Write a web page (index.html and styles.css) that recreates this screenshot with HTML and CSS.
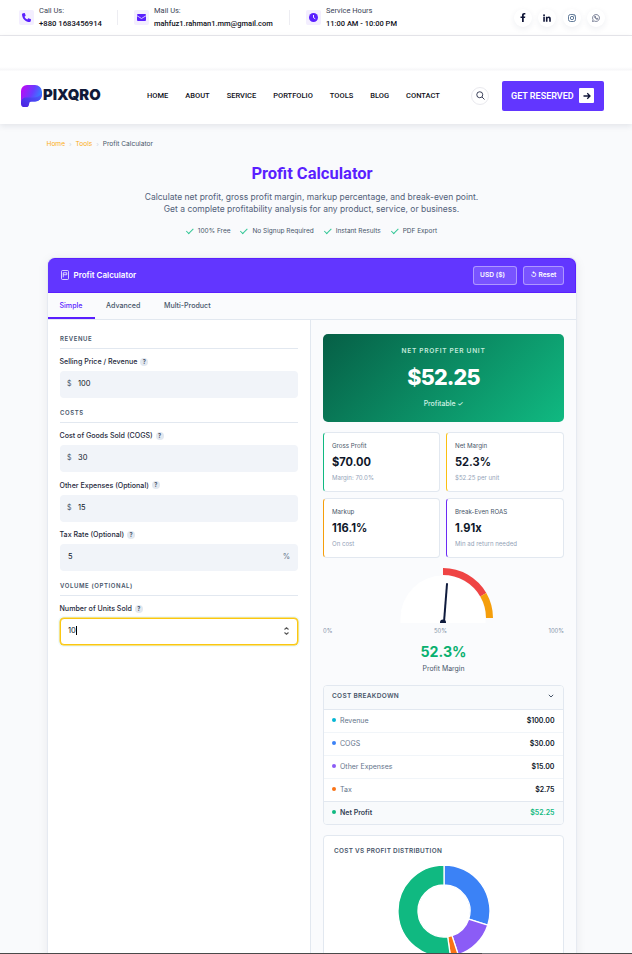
FILE: index.html
```html
<!DOCTYPE html>
<html lang="en">
  <head>
    <meta charset="UTF-8" />
    <title>Profit Calculator</title>
    <link rel="stylesheet" href="styles.css">
  </head>
  <body>
    <!-- Top bar -->
    <div class="topbar">
      <div class="contact call">
        <span class="contact-icon">
          <svg width="9" height="9" viewBox="0 0 512 512"><path fill="#5a1fff" d="M165 25c-8-19-29-29-48-23L29 26C12 31 0 46 0 64c0 247 201 448 448 448 18 0 33-12 38-29l24-88c6-19-4-40-23-48l-96-40c-16-7-35-2-46 12l-41 49C234 335 177 278 144 208l49-40c14-11 19-30 12-47z"/></svg>
        </span>
        <div><span>Call Us:</span><b>+880 1683456914</b></div>
      </div>
      <div class="contact mail">
        <span class="contact-icon">
          <svg width="9" height="7" viewBox="0 0 18 14"><rect width="18" height="14" rx="2" fill="#5a1fff"/><path d="M0 3.5l9 5.5 9-5.5" fill="none" stroke="#f3eeff" stroke-width="1.6"/></svg>
        </span>
        <div><span>Mail Us:</span><b>mahfuz1.rahman1.mm@gmail.com</b></div>
      </div>
      <div class="contact hours">
        <span class="contact-icon">
          <svg width="9" height="9" viewBox="0 0 18 18"><circle cx="9" cy="9" r="9" fill="#5a1fff"/><path d="M9 4v5.300l3.500 2.200" fill="none" stroke="#fff" stroke-width="1.800"/></svg>
        </span>
        <div><span>Service Hours</span><b>11:00 AM - 10:00 PM</b></div>
      </div>
      <div class="socials">
        <a><svg width="8" height="9" viewBox="0 0 16 18"><path fill="#0f1537" d="M6 18v-8H3V7h3V4.500C6 1.500 7.700 0 10.300 0c1.200 0 2.400.2 2.400.2v2.700h-1.400C10 2.900 9.500 3.800 9.500 4.600V7h3.100l-.5 3H9.500v8z"/></svg></a>
        <a><svg width="8" height="8" viewBox="0 0 16 16"><path fill="#0f1537" d="M.5 5.300h3.200V15.500H.5zM2.100.5a1.900 1.900 0 1 1 0 3.800 1.900 1.900 0 0 1 0-3.800zM5.800 5.300h3v1.400c.5-.9 1.600-1.700 3-1.700 3.200 0 3.800 2.100 3.800 4.900v5.600h-3.200v-5c0-1.200 0-2.700-1.600-2.700S9 9.100 9 10.500v5H5.800z"/></svg></a>
        <a><svg width="8" height="8" viewBox="0 0 16 16" fill="none" stroke="#30527a" stroke-width="1.500"><rect x="1" y="1" width="14" height="14" rx="4"/><circle cx="8" cy="8" r="3.300"/><circle cx="12" cy="4" r=".4"/></svg></a>
        <a><svg width="8" height="8" viewBox="0 0 16 16" fill="none" stroke="#3d4566" stroke-width="1.300"><path d="M1 15l1-3.700A6.900 6.900 0 1 1 4.700 14z"/><path d="M5.500 4.500c-1 2 3 7 5.700 6l.4-1.500-2-1-.8 1C7.500 8.500 7 7.500 6.600 6.800l.6-.8-.7-1.700z"/></svg></a>
      </div>
    </div>

    <!-- Main navigation -->
    <div class="navbar">
      <div class="logo">
        <svg width="21" height="22" viewBox="0 0 21 22">
          <defs>
            <linearGradient id="logoMain" x1="0" y1="0.300" x2="1" y2="0.700">
              <stop offset="0" stop-color="#b90cf5"/><stop offset="0.500" stop-color="#6a3cff"/><stop offset="1" stop-color="#2395ff"/>
            </linearGradient>
            <linearGradient id="logoLeg" x1="0" y1="1" x2="1" y2="0">
              <stop offset="0" stop-color="#4e1de0"/><stop offset="1" stop-color="#4a63ff"/>
            </linearGradient>
          </defs>
          <path fill="url(#logoMain)" d="M6 0h8a7 7 0 0 1 7 7v2.500a7 7 0 0 1-7 7H8L0 19V6a6 6 0 0 1 6-6z"/>
          <path fill="url(#logoLeg)" d="M0 18c0-3.500 2-5.500 6-5.500h6c4 0 7-1.500 8.700-4.500.8 5-2.200 8.500-6.700 8.500h-3.500c-1.500 0-2 .7-2.300 2.200A4 4 0 0 1 0 18z"/>
        </svg>
        <span>PIXQRO</span>
      </div>
      <div class="menu">
        <a>HOME</a><a>ABOUT</a><a>SERVICE</a><a>PORTFOLIO</a><a>TOOLS</a><a>BLOG</a><a>CONTACT</a>
      </div>
      <div class="search">
        <svg width="9" height="9" viewBox="0 0 18 18" fill="none" stroke="#1d2340" stroke-width="1.700"><circle cx="7.500" cy="7.500" r="6"/><path d="M12 12l5 5"/></svg>
      </div>
      <div class="reserve">
        <span>GET RESERVED</span>
        <i><svg width="8" height="8" viewBox="0 0 16 16" fill="none" stroke="#0f1537" stroke-width="2.600"><path d="M1 8h13M8.500 2.500L14 8l-5.500 5.500"/></svg></i>
      </div>
    </div>

    <!-- Page heading -->
    <div class="breadcrumb"><a>Home</a><i>›</i><a>Tools</a><i>›</i><span>Profit Calculator</span></div>
    <h1>Profit Calculator</h1>
    <p class="intro">Calculate net profit, gross profit margin, markup percentage, and break-even point.<br>Get a complete profitability analysis for any product, service, or business.</p>
    <div class="perks">
      <span>100% Free</span>
      <span>No Signup Required</span>
      <span>Instant Results</span>
      <span>PDF Export</span>
    </div>

    <!-- Calculator -->
    <div class="calculator">
      <div class="calc-header">
        <svg width="8" height="10" viewBox="0 0 16 20" fill="none" stroke="#fff" stroke-width="1.500"><rect x="1" y="1" width="14" height="18" rx="2"/><path d="M4.500 5.500h7v4h-7M4.500 5.500v9"/></svg>
        <h2>Profit Calculator</h2>
        <button class="currency">USD ($)</button>
        <button class="reset">↺ Reset</button>
      </div>
      <div class="tabs">
        <a class="active">Simple</a><a>Advanced</a><a>Multi-Product</a>
      </div>
      <div class="panes">
        <div class="inputs">
          <h3>REVENUE</h3>
          <label>Selling Price / Revenue <i>?</i></label>
          <div class="field"><span class="prefix">$</span>100</div>
          <h3>COSTS</h3>
          <label>Cost of Goods Sold (COGS) <i>?</i></label>
          <div class="field"><span class="prefix">$</span>30</div>
          <label>Other Expenses (Optional) <i>?</i></label>
          <div class="field"><span class="prefix">$</span>15</div>
          <label>Tax Rate (Optional) <i>?</i></label>
          <div class="field">5<span class="suffix">%</span></div>
          <h3>VOLUME (OPTIONAL)</h3>
          <label>Number of Units Sold <i>?</i></label>
          <div class="field focused">10<span class="caret"></span>
            <svg class="spinner" width="5" height="8" viewBox="0 0 5 8" fill="none" stroke="#555" stroke-width="1.100"><path d="M.5 2.500l2-1.700 2 1.700M.5 5.500l2 1.700 2-1.700"/></svg>
          </div>
        </div>

        <div class="results">
          <div class="net-profit">
            <span class="net-label">NET PROFIT PER UNIT</span>
            <span class="net-value">$52.25</span>
            <span class="net-status">Profitable ✓</span>
          </div>
          <div class="metrics">
            <div class="metric green"><span>Gross Profit</span><b>$70.00</b><small>Margin: 70.0%</small></div>
            <div class="metric yellow"><span>Net Margin</span><b>52.3%</b><small>$52.25 per unit</small></div>
            <div class="metric orange"><span>Markup</span><b>116.1%</b><small>On cost</small></div>
            <div class="metric purple"><span>Break-Even ROAS</span><b>1.91x</b><small>Min ad return needed</small></div>
          </div>
          <div class="gauge">
            <svg width="100" height="55" viewBox="0 0 100 55">
              <path fill="#fff" d="M7.500 55v-5a42.500 42.500 0 0 1 85 0v5z"/>
              <path fill="none" stroke="#ef4444" stroke-width="7" d="M50 3.500A46.500 46.500 0 0 1 90.270 26.750"/>
              <path fill="none" stroke="#f59e0b" stroke-width="7" d="M90.270 26.750A46.500 46.500 0 0 1 96.500 50"/>
              <path stroke="#0f1b3d" stroke-width="2" stroke-linecap="round" d="M51 54L54 16"/>
              <circle cx="50" cy="54.500" r="3" fill="#0f1b3d"/>
            </svg>
            <div class="scale"><span>0%</span><span>50%</span><span>100%</span></div>
            <b>52.3%</b>
            <span>Profit Margin</span>
          </div>
          <div class="breakdown">
            <div class="breakdown-head">COST BREAKDOWN
              <svg width="6" height="4" viewBox="0 0 6 4" fill="none" stroke="#475569"><path d="M.8.800L3 3 5.200.800"/></svg>
            </div>
            <div class="row cyan"><span>Revenue</span><b>$100.00</b></div>
            <div class="row blue"><span>COGS</span><b>$30.00</b></div>
            <div class="row purple"><span>Other Expenses</span><b>$15.00</b></div>
            <div class="row orange"><span>Tax</span><b>$2.75</b></div>
            <div class="row total"><span>Net Profit</span><b>$52.25</b></div>
          </div>
          <div class="chart">
            <h4>COST VS PROFIT DISTRIBUTION</h4>
            <svg width="94" height="94" viewBox="-47 -47 94 94" stroke="#fff" stroke-width="1.300">
              <path fill="#3b82f6" d="M0-46A46 46 0 0 1 43.750 14.210L24.730 8.030A26 26 0 0 0 0-26z"/>
              <path fill="#8b5cf6" d="M43.750 14.210A46 46 0 0 1 14.210 43.750L8.030 24.730A26 26 0 0 0 24.730 8.030z"/>
              <path fill="#f97316" d="M14.210 43.750A46 46 0 0 1 6.480 45.540L3.660 25.740A26 26 0 0 0 8.030 24.730z"/>
              <path fill="#10b981" d="M6.480 45.540A46 46 0 1 1 0-46V-26A26 26 0 1 0 3.660 25.740z"/>
            </svg>
          </div>
        </div>
      </div>
    </div>
    <div class="bottom-edge"></div>
  </body>
</html>
```

FILE: styles.css
```css
* {
  box-sizing: border-box;
}
body {
  margin: 0;
  height: 954px;
  display: flex;
  flex-direction: column;
  overflow: hidden;
  font-family: Inter, sans-serif;
  font-size: 7px;
  color: #0f172a;
  background: #f9fafc;
}
h1,
h2,
h3,
h4,
p {
  margin: 0;
}
i {
  font-style: normal;
}
svg {
  display: block;
  flex-shrink: 0;
}

/* top bar */
.topbar {
  flex: none;
  height: 36px;
  display: flex;
  align-items: center;
  padding: 0 27px 0 19px;
  background: #fff;
  border-bottom: 1px solid #e8e8ec;
  font-family: Roboto, sans-serif;
  font-size: 7.5px;
}
.contact {
  display: flex;
  align-items: center;
  gap: 5px;
  color: #3a3f55;
}
.call {
  width: 115px;
}
.mail {
  width: 172px;
}
.contact-icon {
  width: 15px;
  height: 15px;
  display: flex;
  align-items: center;
  justify-content: center;
  border-radius: 2px;
  background: #f3eeff;
}
.contact div {
  display: flex;
  flex-direction: column;
  line-height: 13px;
  margin-top: -2px;
  white-space: nowrap;
}
.contact b {
  font-weight: 500;
  color: #0f1020;
}
.call b {
  font-size: 7.7px;
}
.call::after,
.mail::after {
  content: "";
  width: 1px;
  height: 15px;
  margin: 0 16px 0 auto;
  background: #ededf2;
}
.socials {
  margin-left: auto;
  display: flex;
  gap: 6.4px;
}
.socials a {
  width: 18px;
  height: 18px;
  display: flex;
  align-items: center;
  justify-content: center;
  border-radius: 50%;
  background: #fff;
  box-shadow: 0 2px 6px rgba(30, 40, 90, 0.07);
}

/* navbar */
.navbar {
  flex: none;
  height: 88px;
  padding: 31px 28px 0 21px;
  display: flex;
  align-items: center;
  background: linear-gradient(#fff 31px, #f6f6f8 34px, #fff 35px);
  box-shadow: 0 2px 6px rgba(30, 40, 70, 0.1);
}
.logo {
  width: 126px;
  display: flex;
  align-items: center;
  font-size: 14.8px;
  font-weight: 900;
  color: #101a38;
}
.logo span {
  margin: -2px 0 0 1px;
}
.menu {
  display: flex;
  width: 324px;
  gap: 17px;
  font-family: Roboto, sans-serif;
  font-size: 7.5px;
  font-weight: 500;
  color: #0f1020;
}
.search {
  width: 18px;
  height: 18px;
  display: flex;
  align-items: center;
  justify-content: center;
  border: 1px solid #e9e9ee;
  border-radius: 50%;
}
.reserve {
  width: 102px;
  height: 30px;
  margin-left: auto;
  padding: 0 10px 0 9px;
  display: flex;
  align-items: center;
  justify-content: space-between;
  border-radius: 2px;
  background: #6236ff;
  color: #fff;
  font: 600 9px Roboto, sans-serif;
  white-space: nowrap;
}
.reserve i {
  width: 15px;
  height: 15px;
  display: flex;
  align-items: center;
  justify-content: center;
  border-radius: 1px;
  background: #fff;
}

/* heading */
.breadcrumb {
  display: flex;
  margin: 14px 0 0 46.5px;
  font-size: 6.6px;
  line-height: 12px;
  color: #475569;
}
.breadcrumb a {
  color: #fbad18;
}
.breadcrumb i {
  width: 10.5px;
  text-align: center;
  color: #cbd5e1;
}
h1 {
  margin-top: 14px;
  text-align: center;
  font: 700 16.5px/20px Roboto, sans-serif;
  color: #5a1fff;
  padding-right: 8px;
}
.intro {
  margin-top: 7px;
  padding-right: 9px;
  text-align: center;
  font-size: 8.5px;
  line-height: 12.3px;
  color: #52617a;
}
.perks {
  display: flex;
  justify-content: center;
  gap: 11px;
  margin-top: 9.4px;
  padding-right: 8px;
  font-size: 6.5px;
  line-height: 12px;
  color: #475569;
}
.perks span {
  display: flex;
  align-items: center;
  gap: 4px;
}
.perks span::before {
  content: "";
  width: 6px;
  height: 3px;
  border: solid #34c796;
  border-width: 0 0 1px 1px;
  transform: rotate(-45deg) translateY(-1px);
}

/* calculator card */
.calculator {
  flex: none;
  width: 528px;
  height: 740px;
  margin: 21px 0 0 48px;
  border-radius: 7px;
  background: #fff;
  box-shadow: 0 0 0 1px #e6eaf1, 0 2px 12px rgba(15, 23, 42, 0.08);
}
.calc-header {
  height: 35px;
  display: flex;
  align-items: center;
  padding: 0 11px 0 13px;
  border-radius: 7px 7px 0 0;
  background: #6236ff;
  border: solid #5a1fff;
  border-width: 1px 1px 1px 0;
  color: #fff;
}
.calc-header h2 {
  margin-left: 4.500px;
  margin-right: auto;
  font-size: 8px;
  font-weight: 600;
}
button {
  height: 19px;
  padding: 0;
  border: 1px solid rgba(255, 255, 255, 0.4);
  border-radius: 3px;
  background: rgba(255, 255, 255, 0.15);
  color: #fff;
  font: 600 6.600px Inter, sans-serif;
}
.currency {
  width: 44px;
  padding-right: 5px;
  margin-right: 6px;
}
.reset {
  width: 41px;
}
.tabs {
  height: 27px;
  display: flex;
  background: #fafbfd;
  border-bottom: 1px solid #e2e8f0;
}
.tabs a {
  height: 26px;
  line-height: 25px;
  padding: 0 12px 0 11.500px;
  font-weight: 500;
  font-size: 7.1px;
  color: #475569;
}
.tabs .active {
  color: #5a1fff;
  border-bottom: 2px solid #5a1fff;
}
.panes {
  display: grid;
  grid-template-columns: 262px 266px;
  height: 678px;
}

/* inputs */
.inputs {
  padding: 4px 12px 0;
}
h3 {
  height: 16px;
  margin: 9.2px 0 6px;
  padding-top: 1px;
  border-bottom: 1px solid #e2e8f0;
  font-size: 6px;
  line-height: 9px;
  font-weight: 600;
  letter-spacing: 0.6px;
  color: #475569;
}
label {
  display: flex;
  align-items: center;
  height: 13px;
  margin: 0 0 3px -0.5px;
  font-size: 7.1px;
  font-weight: 500;
  color: #1e293b;
}
label i {
  width: 8px;
  height: 8px;
  margin-left: 3px;
  border-radius: 50%;
  background: #e2e8f0;
  text-align: center;
  font-size: 5.5px;
  line-height: 8px;
  font-weight: 700;
  color: #475569;
}
.field {
  height: 27px;
  display: flex;
  align-items: center;
  padding: 0 8px 2px;
  border-radius: 4px;
  background: #f1f4f9;
  font-size: 7.5px;
  color: #0f172a;
}
.field + label {
  margin-top: 6.4px;
}
.prefix {
  width: 11px;
  margin-left: -1px;
  font-size: 7px;
  color: #475569;
}
.suffix,
.spinner {
  margin-left: auto;
  color: #64748b;
}
.focused {
  padding: 0 8px 2px 7px;
  border: 1px solid #fbc710;
  background: #fff;
  box-shadow: 0 0 0 0.5px #fbc710, 0 0 0 2px #eefafc;
}
.caret {
  width: 1px;
  height: 9px;
  background: #000;
}

/* results */
.results {
  display: flex;
  flex-direction: column;
  padding: 14px 12px 0;
  background: #fafbfd;
  border-left: 1px solid #e2e8f0;
}
.net-profit {
  flex: none;
  height: 88px;
  display: flex;
  flex-direction: column;
  align-items: center;
  padding-top: 11px;
  border-radius: 5px;
  background: linear-gradient(135deg, #065f46, #10b981);
  color: #fff;
}
.net-label {
  font-size: 6.6px;
  line-height: 12px;
  font-weight: 600;
  letter-spacing: 0.7px;
  color: #c3eadb;
}
.net-value {
  margin-top: 7px;
  font-size: 21.5px;
  line-height: 26px;
  font-weight: 800;
  letter-spacing: -0.8px;
}
.net-status {
  margin-top: 8px;
  font-size: 6.9px;
  line-height: 12px;
  font-weight: 500;
  color: #d4f3e7;
}
.metrics {
  display: grid;
  grid-template-columns: 117px 118px;
  gap: 6px;
  margin-top: 10px;
}
.metric {
  height: 60px;
  display: flex;
  flex-direction: column;
  padding: 8px;
  border: 1px solid #e2e8f0;
  border-radius: 4px;
  background: #fff;
  font-size: 6.2px;
  line-height: 10px;
  color: #475569;
}
.metric b {
  font-size: 11.1px;
  line-height: 14px;
  margin: 4px 0;
  font-weight: 700;
  color: #0f172a;
}
.metric small {
  font-size: 6.1px;
  color: #94a3b8;
}
.metric.green {
  border-left-color: #10b981;
}
.metric.yellow {
  border-left-color: #fbbf0f;
}
.metric.orange {
  border-left-color: #f59e0b;
}
.metric.purple {
  border-left-color: #6a2bf5;
}
.gauge {
  display: flex;
  flex-direction: column;
  align-items: center;
  margin-top: 10px;
  font-size: 6.9px;
  line-height: 10px;
  color: #475569;
}
.gauge svg {
  margin-right: 1px;
}
.scale {
  align-self: stretch;
  display: flex;
  justify-content: space-between;
  margin-top: 3px;
  font-size: 5.8px;
  color: #8492a8;
}
.gauge b {
  margin: 7px 0 3px;
  font-size: 14.2px;
  line-height: 18px;
  color: #09b06f;
}
.breakdown {
  margin-top: 11px;
  border: 1px solid #e2e8f0;
  border-radius: 4px;
  background: #fff;
  overflow: hidden;
}
.breakdown-head {
  height: 24px;
  display: flex;
  align-items: center;
  justify-content: space-between;
  padding: 0 9px 2px 8px;
  border-bottom: 1px solid #e2e8f0;
  background: #f8fafc;
  font-size: 6.5px;
  font-weight: 600;
  letter-spacing: 0.3px;
  color: #475569;
}
.row {
  height: 23px;
  display: flex;
  align-items: center;
  padding: 0 8.5px 1px 8px;
  border-bottom: 1px solid #f1f5f9;
  color: #64748b;
}
.row::before {
  content: "";
  width: 4px;
  height: 4px;
  margin-right: 4px;
  border-radius: 50%;
  background: #10b981;
}
.row b {
  margin-left: auto;
  font-weight: 600;
  color: #0f172a;
}
.row.cyan::before {
  background: #06b6d4;
}
.row.blue::before {
  background: #3b82f6;
}
.row.purple::before {
  background: #8b5cf6;
}
.row.orange::before {
  background: #f97316;
}
.row.orange {
  border-bottom-color: #e2e8f0;
}
.row.total {
  height: 22px;
  border: 0;
  background: #f8fafc;
  font-weight: 600;
  color: #334155;
}
.row.total b {
  color: #10b981;
}
.chart {
  flex: 1;
  margin-top: 10px;
  padding: 9px 10px;
  border: 1px solid #e2e8f0;
  border-radius: 4px;
  background: #fff;
}
h4 {
  font-size: 6.4px;
  line-height: 12px;
  font-weight: 600;
  letter-spacing: 0.3px;
  color: #475569;
}
.chart svg {
  margin: 7.5px auto 0;
}

.bottom-edge {
  position: absolute;
  top: 953px;
  left: 0;
  width: 632px;
  height: 1px;
  background: linear-gradient(90deg, #4a4a4a 482px, #77777c 482px, #77777c 530px, #4a4a4a 530px);
}
```
